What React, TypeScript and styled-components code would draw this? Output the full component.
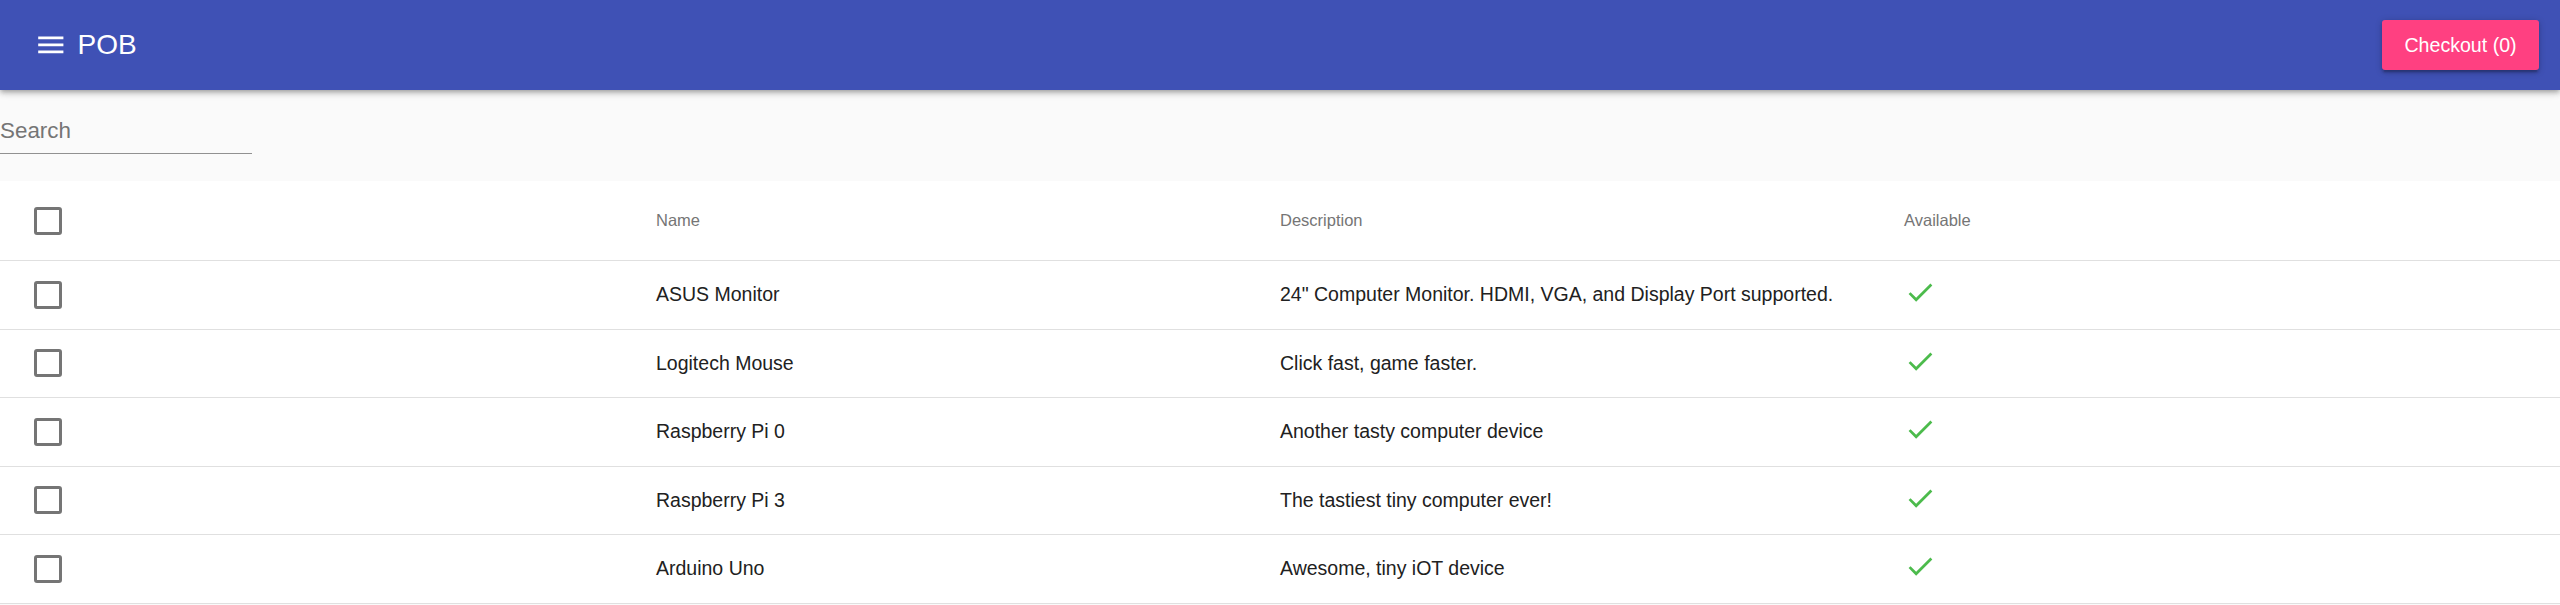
import React from "react";
import styled, { createGlobalStyle } from "styled-components";

const GlobalStyle = createGlobalStyle`
  html, body {
    margin: 0;
    padding: 0;
    background: #fafafa;
    font-family: "Liberation Sans", Arial, Helvetica, sans-serif;
  }
  * { box-sizing: border-box; }
`;

const AppBar = styled.header`
  height: 90px;
  background: #3f51b5;
  display: flex;
  align-items: center;
  padding: 0 21px 0 34px;
  box-shadow: 0 2px 4px -1px rgba(0, 0, 0, 0.2), 0 4px 5px 0 rgba(0, 0, 0, 0.14),
    0 1px 10px 0 rgba(0, 0, 0, 0.12);
  position: relative;
  z-index: 1;
`;

const MenuButton = styled.span`
  display: flex;
  width: 33.6px;
  height: 33.6px;
  color: #fff;
`;

const Title = styled.h1`
  margin: 0 0 0 10px;
  font-size: 28px;
  font-weight: 400;
  color: #fff;
  flex: 1;
  line-height: 1;
`;

const CheckoutButton = styled.button`
  height: 50px;
  padding: 0 22.4px;
  border: none;
  border-radius: 3px;
  background: #ff4081;
  color: #fff;
  font-family: inherit;
  font-size: 19.6px;
  cursor: pointer;
  box-shadow: 0 1.4px 7px 0 rgba(0, 0, 0, 0.2), 0 2.8px 2.8px 0 rgba(0, 0, 0, 0.14),
    0 4px 1.4px -2.8px rgba(0, 0, 0, 0.12);
`;

const SearchBar = styled.div`
  padding: 19px 0 27px;
`;

const SearchInput = styled.input`
  display: block;
  box-sizing: content-box;
  width: 252px;
  height: 44px;
  padding: 0;
  margin: 0;
  border: none;
  border-bottom: 1px solid rgba(0, 0, 0, 0.42);
  background: transparent;
  font-family: inherit;
  font-size: 22.4px;
  color: rgba(0, 0, 0, 0.87);
  outline: none;
  &::placeholder {
    color: #757575;
    opacity: 1;
  }
`;

const Table = styled.div`
  background: #fff;
`;

const Row = styled.div<{ $head?: boolean }>`
  display: grid;
  grid-template-columns: 656px 624px 624px 1fr;
  align-items: center;
  height: ${(p) => (p.$head ? "80px" : "68.5px")};
  border-bottom: 1px solid #e0e0e0;
  font-size: ${(p) => (p.$head ? "16.5px" : "19.5px")};
  color: ${(p) => (p.$head ? "#757575" : "#212121")};
`;

const CheckCell = styled.div`
  padding-left: 34px;
  display: flex;
  align-items: center;
`;

const Cell = styled.div`
  white-space: nowrap;
  display: flex;
  align-items: center;
`;

const Checkbox = styled.span`
  display: block;
  width: 28px;
  height: 28px;
  border: 3.2px solid #757575;
  border-radius: 3px;
`;

const CheckIcon = styled.svg`
  width: 32.4px;
  height: 32.4px;
  margin-top: -5px;
  fill: #4cbb4c;
`;

const items = [
  { name: "ASUS Monitor", desc: '24" Computer Monitor. HDMI, VGA, and Display Port supported.' },
  { name: "Logitech Mouse", desc: "Click fast, game faster." },
  { name: "Raspberry Pi 0", desc: "Another tasty computer device" },
  { name: "Raspberry Pi 3", desc: "The tastiest tiny computer ever!" },
  { name: "Arduino Uno", desc: "Awesome, tiny iOT device" },
];

export default function App() {
  return (
    <>
      <GlobalStyle />
      <AppBar>
        <MenuButton>
          <svg viewBox="0 0 24 24" width="33.6" height="33.6" fill="currentColor">
            <path d="M3 18h18v-2H3v2zm0-5h18v-2H3v2zm0-7v2h18V6H3z" />
          </svg>
        </MenuButton>
        <Title>POB</Title>
        <CheckoutButton>Checkout (0)</CheckoutButton>
      </AppBar>
      <SearchBar>
        <SearchInput placeholder="Search" />
      </SearchBar>
      <Table>
        <Row $head>
          <CheckCell>
            <Checkbox />
          </CheckCell>
          <Cell>Name</Cell>
          <Cell>Description</Cell>
          <Cell>Available</Cell>
        </Row>
        {items.map((it) => (
          <Row key={it.name}>
            <CheckCell>
              <Checkbox />
            </CheckCell>
            <Cell>{it.name}</Cell>
            <Cell>{it.desc}</Cell>
            <Cell>
              <CheckIcon viewBox="0 0 24 24">
                <path d="M9 16.17L4.83 12l-1.42 1.41L9 19 21 7l-1.41-1.41z" />
              </CheckIcon>
            </Cell>
          </Row>
        ))}
      </Table>
    </>
  );
}
